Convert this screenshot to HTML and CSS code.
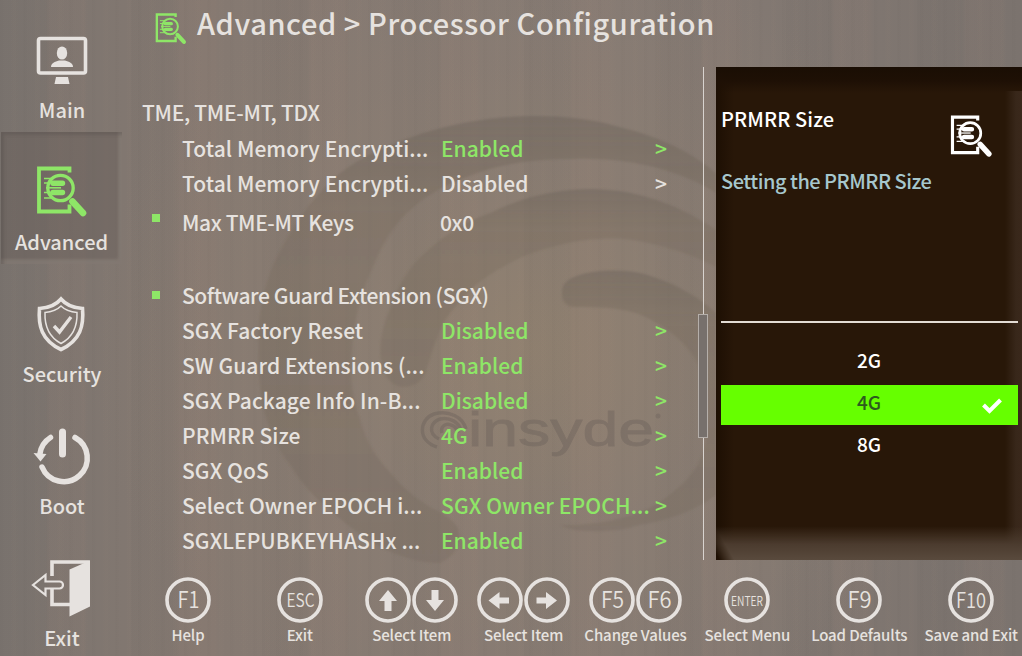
FILE: index.html
```html
<!DOCTYPE html>
<html lang="en">
<head>
<meta charset="utf-8">
<title>Processor Configuration</title>
<link rel="stylesheet" href="styles.css">
</head>
<body>
<svg class="defs" width="0" height="0" aria-hidden="true">
  <symbol id="doc" viewBox="0 0 52 52">
    <path d="M33.500 6.500V2.500H3v43h30.500v-7" fill="none" stroke="currentColor" stroke-width="3.800"/>
    <circle cx="24.500" cy="22" r="12.700" fill="none" stroke="currentColor" stroke-width="3.300"/>
    <path d="M8 12.500h9M8 17h9M8 26.500h9M8 32h9" stroke="currentColor" stroke-width="1.600"/>
    <path d="M17 17.300h9.500M17 26.500h9.500" stroke="currentColor" stroke-width="5.400" stroke-linecap="round"/>
    <path d="M10 21.800h15" stroke="currentColor" stroke-width="1.600"/>
    <path d="M36.500 35.500l10.500 11.500" stroke="currentColor" stroke-width="6.600" stroke-linecap="round"/>
  </symbol>
</svg>

<svg class="backdrop" viewBox="0 0 1022 656" aria-hidden="true">
  <defs>
    <linearGradient id="band" x1="0" y1="0" x2="0" y2="1">
      <stop offset="0" stop-color="#6b625a" stop-opacity=".46"/>
      <stop offset=".22" stop-color="#756858" stop-opacity=".3"/>
      <stop offset="1" stop-color="#75695e" stop-opacity=".34"/>
    </linearGradient>
    <filter id="soft"><feGaussianBlur stdDeviation="1"/></filter>
  </defs>
  <g fill="url(#band)" filter="url(#soft)">
    <path d="M716 173C690 151 660 137 623 128C595 119 565 116 537 116C495 116 459 122 423 133C388 145 362 156 340 173C310 199 288 232 273 265C262 292 257 320 258 345C258 368 259 388 263 408C269 430 277 448 290 465C303 486 317 500 333 512C362 540 400 563 440 563C458 555 462 540 458 528C454 521 448 517 440 512C420 503 404 489 390 472C375 456 364 438 360 418C352 398 350 376 352 355C353 323 361 292 373 267C382 246 392 228 407 213C424 197 445 184 467 177C500 163 537 159 573 159C602 158 631 161 657 168C679 174 699 182 716 193Z"/>
    <path d="M716 230C696 216 672 204 647 197C627 191 607 189 587 189C552 190 520 198 490 213C470 220 454 229 440 240C429 249 420 257 413 265C403 278 395 293 390 308C384 323 380 337 380 352C382 374 389 386 403 387C416 387 425 379 427 368C430 359 433 348 437 338C441 326 448 315 457 305C469 289 484 277 503 267C519 257 536 251 553 247C576 240 600 238 623 239C657 243 689 253 716 267Z"/>
    <path d="M716 313C706 304 697 297 687 292C672 283 656 277 640 273C624 270 608 270 593 272C572 275 562 282 562 291C561 300 565 306 573 307C589 307 606 307 623 310C637 312 649 318 660 325C675 334 688 347 697 362C708 389 711 420 703 452C697 469 687 481 673 492C664 500 653 507 640 512C615 522 586 525 560 525C570 530 580 531 590 531C608 532 625 530 640 525C671 520 698 509 716 495Z"/>
  </g>
  <g class="brand">
    <path d="M437 447c-20-6-18-28-3-33c15-4 29 3 32 15M439 439c-12-6-8-17 1-20c10-2 19 3 21 12M442 433c-2-7 4-10 9-8c4 1 6 4 7 8" fill="none" stroke="#665c57" stroke-width="3.500"/>
    <text x="468" y="446" textLength="186" lengthAdjust="spacingAndGlyphs">insyde</text>
    <circle cx="658" cy="416" r="2.500" fill="#6a605a"/>
  </g>
</svg>

<div class="screen">
  <nav class="sidebar">
    <a class="nav">
      <svg class="nav-icon" viewBox="0 0 60 60">
        <rect x="7.500" y="11.500" width="47" height="34.500" rx="2" fill="none" stroke="currentColor" stroke-width="3.600"/>
        <ellipse cx="31" cy="26" rx="5.200" ry="6.600" fill="currentColor"/>
        <path d="M20 40c0-4 4-5.500 8-6.500h6c4 1 8 2.500 8 6.500z" fill="currentColor"/>
        <path d="M25 50h12l1.500 7h-15z" fill="currentColor"/>
      </svg><span>Main</span></a>
    <a class="nav active">
      <svg class="nav-icon tall" width="52" height="52"><use href="#doc"/></svg><span>Advanced</span></a>
    <a class="nav">
      <svg class="nav-icon" viewBox="1 -4 60 60">
        <path d="M31 4c5 6 12 9 21.500 9.500c1.500 17-2 32-21.500 41C11.500 45.500 8 30.500 9.500 13.500C19 13 26 10 31 4z" fill="none" stroke="currentColor" stroke-width="3.600"/>
        <path d="M31 11c4 4 9 6 16 6.500c.5 13-3 24-16 31c-13-7-16.500-18-16-31C22 17 27 15 31 11z" fill="none" stroke="currentColor" stroke-width="1.500"/>
        <path d="M24 31l5.500 6L41 22" fill="none" stroke="currentColor" stroke-width="3.400"/>
      </svg><span>Security</span></a>
    <a class="nav">
      <svg class="nav-icon" viewBox="1 -1 60 60">
        <path d="M32.500 8v22" stroke="currentColor" stroke-width="7" stroke-linecap="round"/>
        <path d="M45 13.500a23.500 23.500 0 1 1-33 29.500M20.500 13.500a23 23 0 0 0-10.500 16" fill="none" stroke="currentColor" stroke-width="5.500" stroke-linecap="round"/>
        <path d="M3.500 29l13 1l-6 7.500z" fill="currentColor"/>
      </svg><span>Boot</span></a>
    <a class="nav">
      <svg class="nav-icon" viewBox="2 0 60 60">
        <path d="M23 21V7h36v4M23 34v15.500h18" fill="none" stroke="currentColor" stroke-width="3.600"/>
        <path d="M40.500 14.500L61 5.500v46l-20.500 10z" fill="currentColor"/>
        <path d="M4 30l12.500-10v6.500h14a3 3 0 0 1 0 7h-14v6.500z" fill="none" stroke="currentColor" stroke-width="2.200"/>
      </svg><span>Exit</span></a>
  </nav>

  <div class="content">
    <header class="title"><svg class="title-icon"><use href="#doc"/></svg><h1>Advanced &gt; Processor Configuration</h1></header>
    <div class="middle">
      <main class="settings">
        <div class="row group">TME, TME-MT, TDX</div>
        <div class="row on"><i></i><span>Total Memory Encrypti...</span><b>Enabled</b><em>&gt;</em></div>
        <div class="row"><i></i><span>Total Memory Encrypti...</span><b>Disabled</b><em>&gt;</em></div>
        <div class="row mark tall-row"><i></i><span>Max TME-MT Keys</span><b>0x0</b></div>
        <div class="row gap"></div>
        <div class="row mark"><i></i><span>Software Guard Extension (SGX)</span></div>
        <div class="row on"><i></i><span>SGX Factory Reset</span><b>Disabled</b><em>&gt;</em></div>
        <div class="row on"><i></i><span>SW Guard Extensions (...</span><b>Enabled</b><em>&gt;</em></div>
        <div class="row on"><i></i><span>SGX Package Info In-B...</span><b>Disabled</b><em>&gt;</em></div>
        <div class="row on"><i></i><span>PRMRR Size</span><b>4G</b><em>&gt;</em></div>
        <div class="row on"><i></i><span>SGX QoS</span><b>Enabled</b><em>&gt;</em></div>
        <div class="row on"><i></i><span>Select Owner EPOCH i...</span><b class="long">SGX Owner EPOCH...</b><em>&gt;</em></div>
        <div class="row on"><i></i><span>SGXLEPUBKEYHASHx ...</span><b>Enabled</b><em>&gt;</em></div>
      </main>
      <div class="scroll"><div class="line line-top"></div><div class="thumb"></div><div class="line line-end"></div></div>
      <aside class="panel">
        <div class="help">
          <div class="help-text"><h2>PRMRR Size</h2><p>Setting the PRMRR Size</p></div>
          <svg class="help-icon"><use href="#doc"/></svg>
        </div>
        <div class="options">
          <div class="option">2G</div>
          <div class="option selected"><span>4G</span>
            <svg class="check" viewBox="0 0 22 16"><path d="M2.500 7l6 6L19.500 2" fill="none" stroke="#fff" stroke-width="4"/></svg></div>
          <div class="option">8G</div>
        </div>
      </aside>
    </div>
    <footer class="keys">
      <div class="key"><div class="caps"><svg viewBox="0 0 46 46"><circle cx="23" cy="23" r="21"/><text x="12.500" y="31" font-size="23" textLength="22" lengthAdjust="spacingAndGlyphs">F1</text></svg></div>Help</div>
      <div class="key"><div class="caps"><svg viewBox="0 0 46 46"><circle cx="23" cy="23" r="21"/><text x="9.500" y="29.500" font-size="19" textLength="28" lengthAdjust="spacingAndGlyphs">ESC</text></svg></div>Exit</div>
      <div class="key"><div class="caps"><svg viewBox="0 0 46 46"><circle cx="23" cy="23" r="21"/><path d="M23 13l9 11h-5.500v10h-7V24H14z"/></svg><svg viewBox="0 0 46 46"><circle cx="23" cy="23" r="21"/><path d="M23 34l9-11h-5.500V13h-7v10H14z"/></svg></div>Select Item</div>
      <div class="key"><div class="caps"><svg viewBox="0 0 46 46"><circle cx="23" cy="23" r="21"/><path d="M11.500 23.500l11-8.500v5.500h9.500v6h-9.500V32z"/></svg><svg viewBox="0 0 46 46"><circle cx="23" cy="23" r="21"/><path d="M33 23.500L22 15v5.500h-9.500v6H22V32z"/></svg></div>Select Item</div>
      <div class="key"><div class="caps"><svg viewBox="0 0 46 46"><circle cx="23" cy="23" r="21"/><text x="12" y="30.500" font-size="23" textLength="23" lengthAdjust="spacingAndGlyphs">F5</text></svg><svg viewBox="0 0 46 46"><circle cx="23" cy="23" r="21"/><text x="11.500" y="30.500" font-size="23" textLength="24" lengthAdjust="spacingAndGlyphs">F6</text></svg></div>Change Values</div>
      <div class="key"><div class="caps"><svg viewBox="0 0 46 46"><circle cx="23" cy="23" r="21"/><text x="7" y="28.500" font-size="13" textLength="32" lengthAdjust="spacingAndGlyphs">ENTER</text></svg></div>Select Menu</div>
      <div class="key"><div class="caps"><svg viewBox="0 0 46 46"><circle cx="23" cy="23" r="21"/><text x="11.500" y="30.500" font-size="23" textLength="24" lengthAdjust="spacingAndGlyphs">F9</text></svg></div>Load Defaults</div>
      <div class="key"><div class="caps"><svg viewBox="0 0 46 46"><circle cx="23" cy="23" r="21"/><text x="8" y="30.500" font-size="21" textLength="30" lengthAdjust="spacingAndGlyphs">F10</text></svg></div>Save and Exit</div>
    </footer>
  </div>
</div>
</body>
</html>
```

FILE: styles.css
```css
* { box-sizing: border-box; }

body {
  margin: 0;
  width: 1022px;
  height: 656px;
  overflow: hidden;
  color: #e6e2df;
  font-family: "Noto Sans CJK SC", "Noto Sans", sans-serif;
  font-weight: 500;
  background:
    repeating-linear-gradient(90deg, rgba(70,66,62,.025) 0 2px, transparent 5px 11px, rgba(170,145,125,.03) 13px 15px, transparent 18px 23px),
    repeating-linear-gradient(90deg, rgba(60,60,60,.03) 0 45px, rgba(170,130,115,.05) 49px 84px, transparent 88px 131px),
    radial-gradient(ellipse 440px 400px at 530px 350px, rgba(146,130,112,.9) 0, rgba(140,126,114,.7) 45%, rgba(134,122,113,0) 100%),
    linear-gradient(90deg, #7b746f, #857971 20%, #867b74 60%, #7b736e);
}

.defs { position: absolute; }

.backdrop {
  position: absolute;
  left: 0;
  top: 0;
  width: 1022px;
  height: 656px;
}

.brand { opacity: .36; filter: blur(.7px); }
.brand text { font: 49px "Liberation Sans", sans-serif; fill: #665c57; stroke: #665c57; stroke-width: .8; }

.screen { position: relative; display: flex; height: 656px; }

.sidebar { width: 124px; flex: none; display: flex; flex-direction: column; }

.nav {
  height: 132px;
  flex: none;
  display: flex;
  flex-direction: column;
  align-items: center;
  padding-top: 27px;
  font-size: 20px;
  line-height: 30px;
  letter-spacing: 0;
}
.nav-icon { width: 60px; height: 60px; overflow: visible; margin: 0 3px 8px 0; }
.nav-icon.tall { width: 52px; height: 52px; margin: 7px 0 9px; }
.nav.active {
  width: 121px;
  margin-left: 1px;
  background: rgba(100,90,85,.42);
  box-shadow: inset 3px 3px 3px rgba(80,73,69,.3), inset -4px -5px 3px rgba(150,140,132,.4);
}
.nav.active svg { color: #8ee667; }

.content { flex: none; width: 904px; display: flex; flex-direction: column; }

.title { height: 67px; display: flex; padding: 0 0 0 31px; }
.title-icon { width: 32px; height: 32px; margin-top: 13px; color: #8ee667; }
h1 { margin: 0 0 0 10px; font-size: 29px; font-weight: 500; line-height: 45px; letter-spacing: .57px; white-space: nowrap; }

.middle { height: 493px; display: flex; }

.settings { width: 574px; padding: 27px 0 0 18px; font-size: 21px; letter-spacing: .07px; }
.row {
  display: grid;
  grid-template-columns: 40px 259px 214px 20px;
  height: 35px;
  line-height: 35px;
  white-space: nowrap;
}
.row b, .row em { font-weight: 500; font-style: normal; }
.row b { letter-spacing: 0; }
.row b.long { letter-spacing: .15px; }
.row.on b, .row.on em { color: #8ee667; }
.row.group { display: block; height: 37px; line-height: 36px; letter-spacing: -.3px; }
.row.mark span { letter-spacing: -.4px; }
.row.mark b { margin-left: -1px; letter-spacing: -.4px; }
.row.tall-row { height: 41px; line-height: 42px; }
.row.gap { height: 36px; }
.row.mark i { width: 8px; height: 8px; margin: 13px 0 0 10px; background: #8ee667; }

.scroll { width: 10px; height: 493px; display: flex; flex-direction: column; align-items: center; }
.line { width: 1px; background: #d8d3cf; }
.line-top { height: 247px; }
.thumb { width: 10px; height: 124px; border: 1px solid #b5afaa; background: #77706c; }
.line-end { flex: 1; }

.panel {
  position: relative;
  width: 306px;
  margin-left: 8px;
  padding: 0 4px 0 5px;
  background:
    linear-gradient(270deg, #3a281b 0, #38271a 6px, rgba(40,23,8,0) 17px) 100% 24px / 17px 469px no-repeat,
    linear-gradient(180deg, #1a0e04 0, #1e1005 14px, rgba(40,23,8,0) 26px),
    linear-gradient(90deg, #1d0f03 0, #281708 18px);
}
.panel::after {
  content: "";
  position: absolute;
  left: 0;
  right: 0;
  bottom: 0;
  height: 34px;
  background: linear-gradient(0deg, #594a3d 0, #4b3b2e 16px, rgba(48,31,17,0) 34px);
  -webkit-mask-image: linear-gradient(60deg, transparent 3px, #000 16px);
  mask-image: linear-gradient(60deg, transparent 3px, #000 16px);
}
.help { height: 256px; display: flex; justify-content: space-between; border-bottom: 2px solid #e3dcd4; }
.help-text { padding: 37px 0 0 0; }
h2, p { margin: 0; font-size: 20px; font-weight: 500; line-height: 30px; white-space: nowrap; }
h2 { color: #fff; letter-spacing: .1px; }
p { margin-top: 32px; color: #a6c7cd; letter-spacing: -.5px; }
.help-icon { width: 43px; height: 43px; margin: 48px 25px 0 0; color: #fff; }

.options { padding-top: 20px; font-size: 19px; color: #fff; }
.option { display: flex; align-items: center; justify-content: center; height: 40px; line-height: 36px; padding: 0 1px 6px 0; }
.option + .option { margin-top: 2px; }
.option.selected { position: relative; background: #66ff00; color: #2d5a1e; }
.check { position: absolute; right: 15px; top: 13px; width: 22px; height: 16px; }

.keys { display: flex; padding: 17px 0 0 8px; }
.key { width: 111.9px; flex: none; display: flex; flex-direction: column; align-items: center; font-size: 15px; line-height: 24px; letter-spacing: -.12px; white-space: nowrap; }
.caps { display: flex; gap: 1px; }
.caps svg { width: 46px; height: 46px; }
.caps circle { fill: none; stroke: #e6e2df; stroke-width: 3.6; }
.caps path, .caps text { fill: #e6e2df; }
.caps text { font-family: "Noto Sans CJK SC", sans-serif; font-weight: 350; letter-spacing: 0; }
```
